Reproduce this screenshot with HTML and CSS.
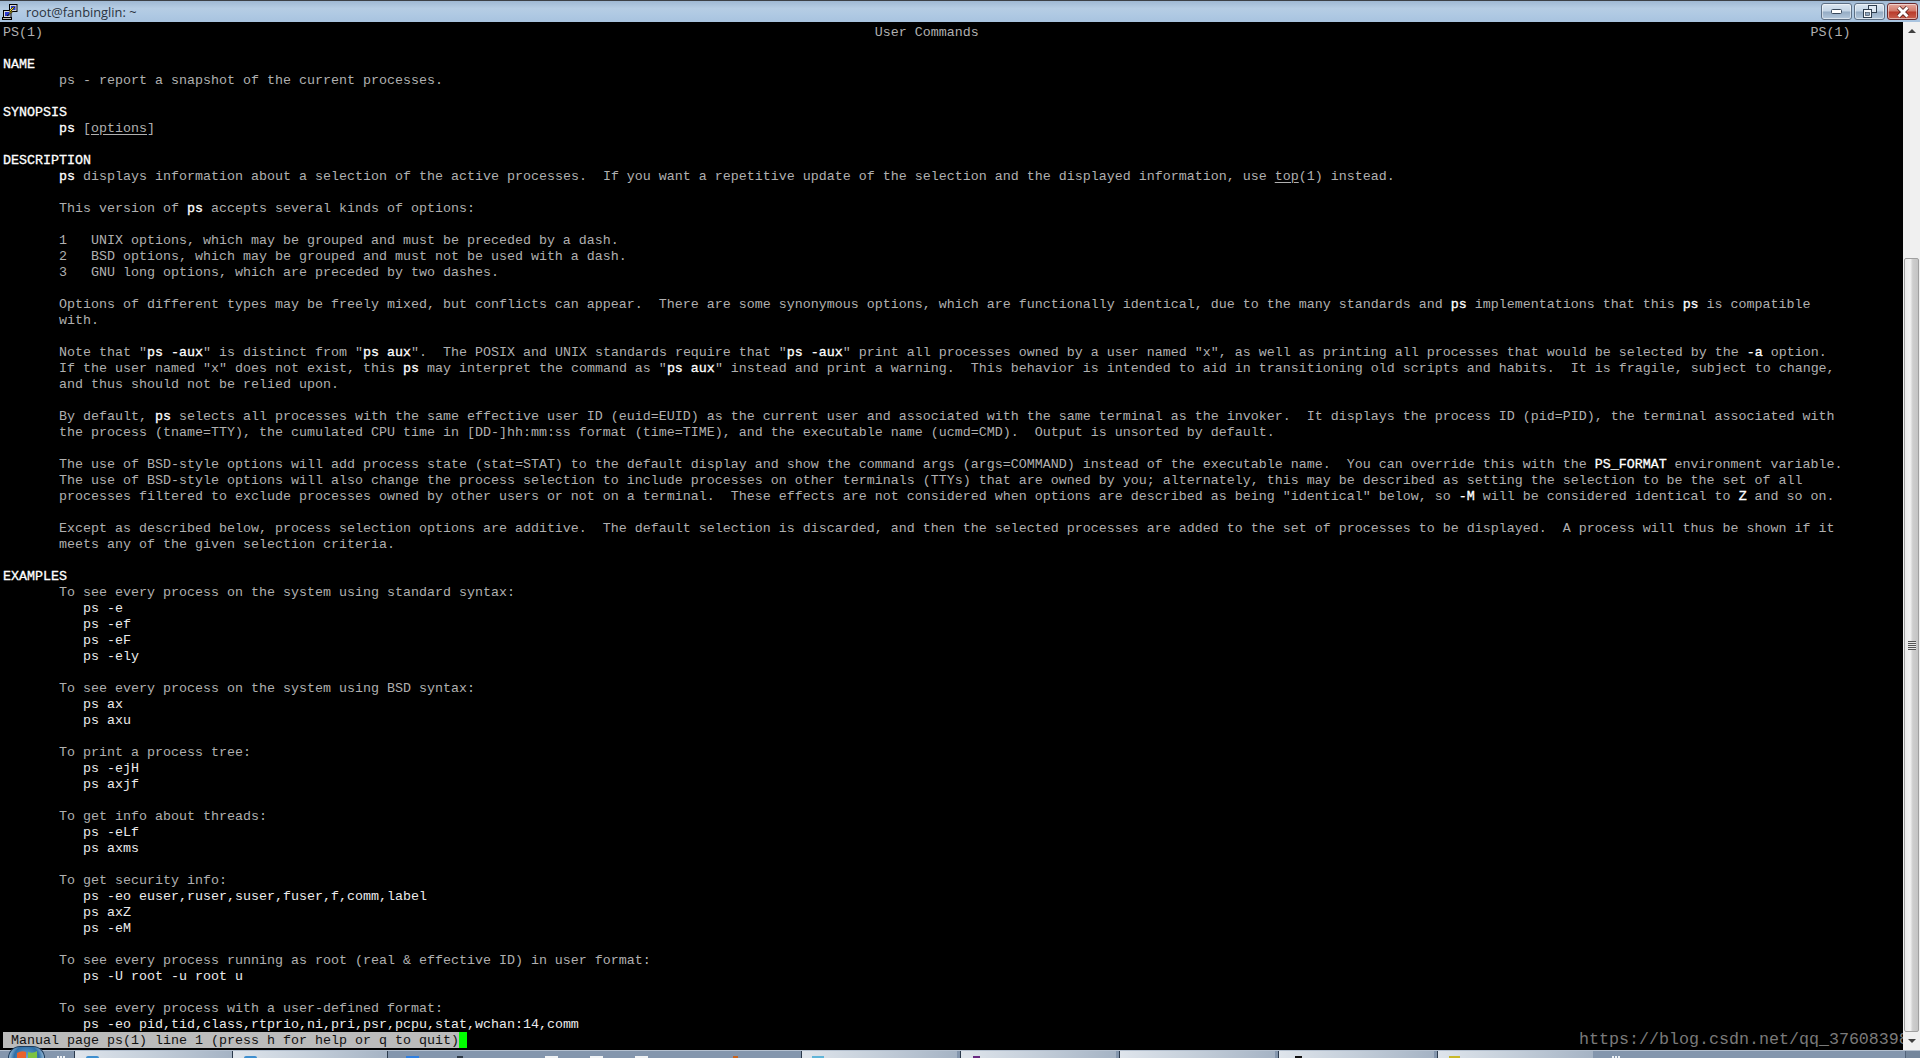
FILE: index.html
```html
<!DOCTYPE html>
<html lang="en">
<head>
<meta charset="utf-8">
<title>root@fanbinglin: ~</title>
<link rel="stylesheet" href="styles.css">
</head>
<body>
<div class="window">
  <header class="titlebar">
    <svg class="app-icon" viewBox="0 0 16 16" width="16" height="16">
      <rect x="7.5" y="0.5" width="7.5" height="7" fill="#d8d8d8" stroke="#000"/>
      <rect x="9" y="2" width="4.5" height="4" fill="#2a3ad0"/>
      <rect x="1.5" y="6.5" width="7.5" height="7" fill="#d8d8d8" stroke="#000"/>
      <rect x="3" y="8" width="4.5" height="4" fill="#2a3ad0"/>
      <rect x="0.5" y="13.5" width="9" height="2" fill="#b8b8b8" stroke="#000"/>
      <path d="M11 3 L7 7 L9 7.5 L5 12 L11 7.5 L9 7 L12.5 3.5 Z" fill="#ffe418" stroke="#000" stroke-width="0.6"/>
    </svg>
    <span class="title-text">root@fanbinglin: ~</span>
    <div class="win-buttons">
      <div class="win-btn">
        <svg width="12" height="6" viewBox="0 0 12 6"><rect x="0.5" y="0.5" width="10" height="4" rx="1" fill="#fff" stroke="#39495c"/></svg>
      </div>
      <div class="win-btn">
        <svg width="14" height="13" viewBox="0 0 14 13"><rect x="5.5" y="0.5" width="8" height="7" fill="#dfe8f2" stroke="#2f3e4f"/><rect x="0.5" y="4.5" width="8" height="8" fill="#f4f7fa" stroke="#2f3e4f"/><rect x="2.5" y="7.5" width="4" height="3" fill="#8fa6bf" stroke="#2f3e4f" stroke-width="0.6"/></svg>
      </div>
      <div class="win-btn win-close">
        <svg width="14" height="12" viewBox="0 0 14 12"><path d="M2.5 1.5 L11.5 10.5 M11.5 1.5 L2.5 10.5" stroke="#4d1a16" stroke-width="4.4"/><path d="M2.5 1.5 L11.5 10.5 M11.5 1.5 L2.5 10.5" stroke="#fff" stroke-width="3"/></svg>
      </div>
    </div>
  </header>
  <main class="client">
    <div class="terminal">
<pre class="screen">PS(1)                                                                                                        User Commands                                                                                                        PS(1)

<b>NAME</b>
       ps - report a snapshot of the current processes.

<b>SYNOPSIS</b>
       <b>ps</b> [<u>options</u>]

<b>DESCRIPTION</b>
       <b>ps</b> displays information about a selection of the active processes.  If you want a repetitive update of the selection and the displayed information, use <u>top</u>(1) instead.

       This version of <b>ps</b> accepts several kinds of options:

       1   UNIX options, which may be grouped and must be preceded by a dash.
       2   BSD options, which may be grouped and must not be used with a dash.
       3   GNU long options, which are preceded by two dashes.

       Options of different types may be freely mixed, but conflicts can appear.  There are some synonymous options, which are functionally identical, due to the many standards and <b>ps</b> implementations that this <b>ps</b> is compatible
       with.

       Note that "<b>ps -aux</b>" is distinct from "<b>ps aux</b>".  The POSIX and UNIX standards require that "<b>ps -aux</b>" print all processes owned by a user named "x", as well as printing all processes that would be selected by the <b>-a</b> option.
       If the user named "x" does not exist, this <b>ps</b> may interpret the command as "<b>ps aux</b>" instead and print a warning.  This behavior is intended to aid in transitioning old scripts and habits.  It is fragile, subject to change,
       and thus should not be relied upon.

       By default, <b>ps</b> selects all processes with the same effective user ID (euid=EUID) as the current user and associated with the same terminal as the invoker.  It displays the process ID (pid=PID), the terminal associated with
       the process (tname=TTY), the cumulated CPU time in [DD-]hh:mm:ss format (time=TIME), and the executable name (ucmd=CMD).  Output is unsorted by default.

       The use of BSD-style options will add process state (stat=STAT) to the default display and show the command args (args=COMMAND) instead of the executable name.  You can override this with the <b>PS_FORMAT</b> environment variable.
       The use of BSD-style options will also change the process selection to include processes on other terminals (TTYs) that are owned by you; alternately, this may be described as setting the selection to be the set of all
       processes filtered to exclude processes owned by other users or not on a terminal.  These effects are not considered when options are described as being "identical" below, so <b>-M</b> will be considered identical to <b>Z</b> and so on.

       Except as described below, process selection options are additive.  The default selection is discarded, and then the selected processes are added to the set of processes to be displayed.  A process will thus be shown if it
       meets any of the given selection criteria.

<b>EXAMPLES</b>
       To see every process on the system using standard syntax:
          <em>ps -e</em>
          <em>ps -ef</em>
          <em>ps -eF</em>
          <em>ps -ely</em>

       To see every process on the system using BSD syntax:
          <em>ps ax</em>
          <em>ps axu</em>

       To print a process tree:
          <em>ps -ejH</em>
          <em>ps axjf</em>

       To get info about threads:
          <em>ps -eLf</em>
          <em>ps axms</em>

       To get security info:
          <em>ps -eo euser,ruser,suser,fuser,f,comm,label</em>
          <em>ps axZ</em>
          <em>ps -eM</em>

       To see every process running as root (real &amp; effective ID) in user format:
          <em>ps -U root -u root u</em>

       To see every process with a user-defined format:
          <em>ps -eo pid,tid,class,rtprio,ni,pri,psr,pcpu,stat,wchan:14,comm</em>
<span class="status"> Manual page ps(1) line 1 (press h for help or q to quit)</span><span class="cursor"> </span></pre>
      <div class="watermark">https://blog.csdn.net/qq_37608398</div>
    </div>
    <aside class="scrollbar">
      <div class="sb-arrow"><span class="tri-up"></span></div>
      <div class="sb-track"></div>
      <div class="sb-thumb"><span class="sb-grip"></span></div>
      <div class="sb-arrow sb-arrow-down"><span class="tri-down"></span></div>
    </aside>
  </main>
  <footer class="taskbar">
    <div class="start-orb">
      <svg class="start-flag" width="22" height="10" viewBox="0 0 22 10"><path d="M1 3 Q6 0 10 2 L10 10 L1 10 Z" fill="#e8622c"/><path d="M12 2 Q17 4 21 1 L21 10 L12 10 Z" fill="#7cc242"/></svg>
    </div>
    <span class="dots dots-start"></span>
    <div class="task task-first"><i class="ico ico-arc"></i></div>
    <div class="task task-second"><i class="ico ico-arc"></i></div>
    <div class="tray-group">
      <i class="ico ico-blue"></i>
      <i class="ico ico-dark"></i>
      <i class="ico ico-white ico-w1"></i>
      <i class="ico ico-white ico-w2"></i>
      <i class="ico ico-white ico-w2"></i>
      <i class="ico ico-orange"></i>
    </div>
    <div class="task"><i class="ico ico-cyan"></i></div>
    <div class="task"><i class="ico ico-purple"></i></div>
    <div class="task"></div>
    <div class="task"><i class="ico ico-black"></i></div>
    <div class="task"><i class="ico ico-yellow"></i></div>
    <span class="dots dots-end"></span>
    <div class="show-desktop"></div>
  </footer>
</div>
</body>
</html>
```
FILE: styles.css
```css
* { box-sizing: border-box; }
html, body { margin: 0; padding: 0; height: 100%; background: #000; overflow: hidden; }

.window { display: flex; flex-direction: column; width: 1920px; height: 1058px; }

/* title bar */
.titlebar {
  display: flex; align-items: center; height: 22px; flex: none;
  padding-left: 2px;
  border-top: 1px solid #3c4046;
  background: linear-gradient(180deg, #9fb8d3 0%, #b6cde4 35%, #afc9e3 65%, #a8c3df 100%);
}
.app-icon { flex: none; margin-top: 1px; }
.title-text {
  margin-left: 8px; font: 12.85px/20px "Open Sans", "Liberation Sans", sans-serif; color: #2b3440;
}
.win-buttons { display: flex; gap: 2px; margin-left: auto; margin-right: 2px; align-self: flex-start; margin-top: 2px; }
.win-btn {
  display: flex; align-items: center; justify-content: center;
  width: 31px; height: 17px; border: 1px solid #5d6f84; border-radius: 3px;
  background: linear-gradient(180deg, #dbe6f1 0%, #c4d5e6 48%, #94abc3 52%, #b4c8dc 100%);
  box-shadow: inset 0 0 0 1px rgba(255,255,255,.5);
}
.win-close {
  border-color: #6a2a2e;
  background: linear-gradient(180deg, #e3a79d 0%, #d27a6a 48%, #b93a2a 52%, #c9604e 100%);
}

/* terminal */
.client { display: flex; flex: none; height: 1028px; }
.terminal { position: relative; flex: 1; background: #000; overflow: hidden; }
.screen {
  margin: 0; padding: 3px 0 0 3px;
  font: 13.333px/16px "Liberation Mono", "Courier New", monospace;
  color: #b0b0b0; white-space: pre;
}
.screen b { color: #fff; font-weight: 400; -webkit-text-stroke: 0.3px #fff; }
.screen em { color: #ececec; font-style: normal; }
.screen u { text-underline-offset: 2px; }
.status {
  display: inline-block; height: 16px; margin-top: -1px; line-height: 18px;
  background: #bbb; color: #111; vertical-align: top;
}
.cursor { display: inline-block; width: 8px; height: 16px; margin-top: -1px; background: #00ff00; vertical-align: top; }
.watermark {
  position: absolute; left: 1579px; top: 1008px; white-space: nowrap;
  font: 16.67px/20px "Liberation Mono", monospace; color: #7a7a7a;
}

/* scrollbar */
.scrollbar { display: flex; flex-direction: column; width: 17px; flex: none; background: #f0f0f0; }
.sb-arrow { display: flex; align-items: center; justify-content: center; height: 17px; flex: none; }
.sb-arrow-down { height: 18px; }
.tri-up { border: 4px solid transparent; border-top: 0; border-bottom: 4px solid #404040; width: 0; height: 0; }
.tri-down { border: 4px solid transparent; border-bottom: 0; border-top: 4px solid #404040; width: 0; height: 0; }
.sb-track { height: 219px; flex: none; }
.sb-thumb {
  position: relative; flex: 1; margin: 0 1px; border: 1px solid #a0a0a0; border-radius: 2px;
  background: linear-gradient(90deg, #eaeaea 0%, #f2f2f2 40%, #cdcdcd 60%, #c4c4c4 100%);
  display: flex; align-items: center; justify-content: center;
}
.sb-grip {
  display: block; width: 8px; height: 9px;
  background: repeating-linear-gradient(180deg, #555 0 1px, #e8e8e8 1px 2px);
}

/* taskbar */
.taskbar {
  position: relative; display: flex; flex: none; height: 8px; padding-left: 75px;
  background: #8496ad; border-top: 1px solid #b4c0cf; overflow: visible;
}
.start-orb {
  position: absolute; left: 8px; top: -5px; width: 37px; height: 12px;
  overflow: hidden; border-radius: 19px 19px 0 0;
  background: radial-gradient(circle at 50% 100%, #66a6d8 0%, #2f6fa6 60%, #bcd4e8 95%);
  border: 1px solid #1d3c5c; border-bottom: 0;
  display: flex; justify-content: center; align-items: flex-end;
}
.start-flag { display: block; margin-bottom: -2px; }
.dots {
  display: block; width: 8px; height: 2px; margin-top: 5px;
  background: repeating-linear-gradient(90deg, #eef2f6 0 2px, transparent 2px 3px);
}
.dots-start { position: absolute; left: 57px; top: 0; }
.dots-end { margin-left: 15px; margin-right: auto; }

.task {
  display: flex; width: 155px; flex: none; margin-right: 4px; padding-left: 10px;
  background: linear-gradient(90deg, #dfe5ec 0%, #c6d0db 45%, #a5b3c4 100%);
  box-shadow: -1px 0 0 #2b3a4c;
  overflow: hidden;
}
.task-first { width: 157px; margin-right: 1px; padding-left: 11px; }
.task-second { margin-right: 0; padding-left: 11px; }
.tray-group { display: flex; width: 414px; flex: none; overflow: hidden; box-shadow: -1px 0 0 #2b3a4c; }

.ico { display: block; flex: none; height: 2px; margin-top: 5px; }
.ico-arc { width: 13px; background: #3f8fcf; border-radius: 7px 7px 0 0; }
.ico-blue { width: 13px; margin-left: 18px; background: #2f7fe0; }
.ico-dark { width: 6px; margin-left: 38px; background: #2e3a48; }
.ico-white { width: 13px; background: #f2f4f6; }
.ico-w1 { margin-left: 82px; }
.ico-w2 { margin-left: 32px; }
.ico-orange { width: 5px; margin-left: 85px; background: #c8641e; }
.ico-cyan { width: 12px; background: #5fb4d8; }
.ico-purple { width: 7px; margin-left: 2px; background: #6a2a82; }
.ico-black { width: 7px; margin-left: 6px; background: #111; }
.ico-yellow { width: 11px; margin-left: 1px; background: #c9b92a; }

.show-desktop { width: 15px; flex: none; background: #74869c; border-left: 1px solid #52637a; }
```
